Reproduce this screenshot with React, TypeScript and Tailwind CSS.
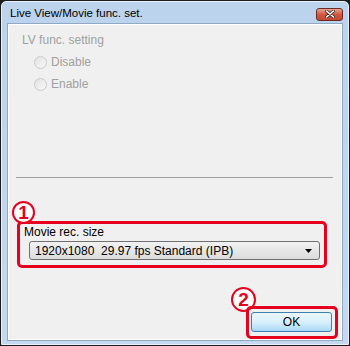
import React from 'react';

const FONT = { fontFamily: '"Liberation Sans", Arial, sans-serif' };

function Circled({ n, size }: { n: string; size: string }) {
  return (
    <div className={`${size} rounded-full border-2 border-[#e6001f] bg-white flex items-center justify-center text-[#e6001f] text-[19px] leading-none font-bold`}>
      {n}
    </div>
  );
}

function Radio({ label }: { label: string }) {
  return (
    <div className="flex items-center gap-[4px] h-[22px] pl-[18px]">
      <div className="w-[13px] h-[13px] rounded-full border border-[#cacaca] bg-gradient-to-br from-[#e2e2e2] to-[#f8f8f8]" />
      <span className="text-[#a0a0a0] text-[12px]">{label}</span>
    </div>
  );
}

export default function App() {
  return (
    <div style={FONT} className="w-[350px] h-[346px] bg-[#1c1c1c] p-px">
      <div className="w-full h-full bg-gradient-to-b from-[#bcd3ed] to-[#c4d9ef] border border-[#e8f1fb] flex flex-col rounded-t-[5px]">
        {/* Title bar */}
        <div className="h-[25px] flex items-center justify-between pl-[8px] pr-[5px]">
          <span className="text-[11.5px] text-black mt-[3px]">Live View/Movie func. set.</span>
          <div className="w-[27px] h-[13px] mt-[3px] rounded-[3px] border border-[#6d2a23] bg-gradient-to-b from-[#e8a493] via-[#d2563f] to-[#c44a32] flex items-center justify-center">
            <svg width="10" height="8" viewBox="0 0 10 8">
              <path d="M1.5 1 L8.5 7 M8.5 1 L1.5 7" stroke="#3a2a2a" strokeWidth="3" strokeLinecap="round" />
              <path d="M1.5 1 L8.5 7 M8.5 1 L1.5 7" stroke="#ffffff" strokeWidth="1.6" strokeLinecap="round" />
            </svg>
          </div>
        </div>
        {/* Client area */}
        <div className="mx-[5px] mb-[3px] flex-1 border border-[#8fa8c4] bg-white p-px">
          <div className="w-full h-full bg-[#f0f0f0] flex flex-col px-[7px] pt-[7px]">
            <div className="text-[#a0a0a0] text-[12px] pl-[6px] h-[16px] leading-[16px]">LV func. setting</div>
            <div className="mt-[3px]">
              <Radio label="Disable" />
              <Radio label="Enable" />
            </div>
            <div className="mt-[82px] h-px bg-[#a0a0a0] mr-[1px]" />
            <div className="mt-[23px] flex flex-col">
              <div className="-ml-[4px] -mb-[3px] relative z-10">
                <Circled n="1" size="w-[23px] h-[23px]" />
              </div>
              <div className="ml-[1px] w-[310px] h-[47px] border-[3px] border-[#e6001f] rounded-[5px] px-[4px] pt-[1px]">
                <div className="text-[12px] text-black h-[14px] leading-[14px]">Movie rec. size</div>
                <div className="mt-[2px] ml-[5px] w-[291px] h-[19px] border border-[#707070] rounded-[3px] bg-gradient-to-b from-[#f2f2f2] to-[#dcdcdc] flex items-center justify-between pl-[5px] pr-[6px]">
                  <span className="text-[12px] text-black">1920x1080&nbsp;&nbsp;29.97 fps Standard (IPB)</span>
                  <svg width="8" height="4" viewBox="0 0 8 4"><path d="M0 0 H7 L3.5 4 Z" fill="#000" /></svg>
                </div>
              </div>
            </div>
            <div className="mt-[19px] flex justify-end -mr-[4px]">
              <div className="flex flex-col items-start">
                <div className="-mb-[6px] relative z-10">
                  <Circled n="2" size="w-[25px] h-[25px]" />
                </div>
                <div className="ml-[15px] w-[92px] h-[33px] border-[3px] border-[#e6001f] rounded-[5px] pt-[3px] px-[2px] relative z-20">
                  <div className="w-[81px] h-[20px] border border-[#3c7fb1] rounded-[3px] bg-gradient-to-b from-[#eaf6fd] via-[#d9f0fc] to-[#a7d9f5] flex items-center justify-center text-[12px] text-black">
                    OK
                  </div>
                </div>
              </div>
            </div>
          </div>
        </div>
      </div>
    </div>
  );
}
